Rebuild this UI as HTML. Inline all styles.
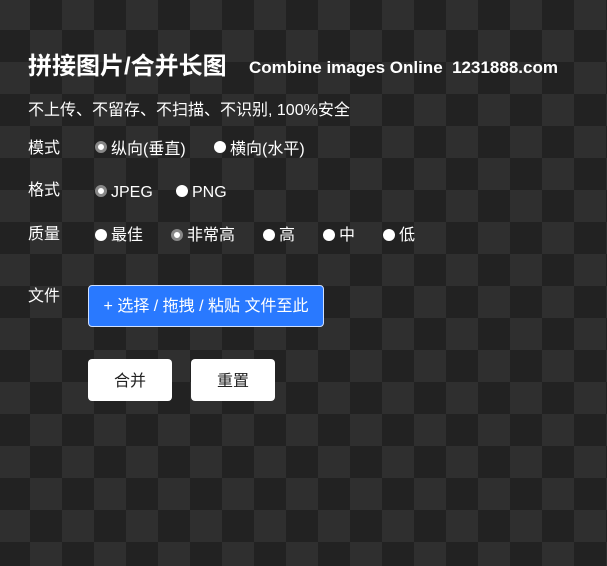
<!DOCTYPE html>
<html><head><meta charset="utf-8"><style>
html,body{margin:0;padding:0;}
body{width:607px;height:566px;overflow:hidden;position:relative;background:#222;
font-family:"Liberation Sans","Noto Sans CJK SC",sans-serif;color:#fff;font-size:16px;}
.bg{position:absolute;left:0;top:0;}
.a{position:absolute;white-space:nowrap;line-height:20px;}
.r{position:absolute;width:12px;height:12px;border-radius:50%;background:#fff;box-sizing:border-box;}
.r.c{border:3px solid #888;background:#fff;}
.btn{position:absolute;background:#fff;color:#222;border-radius:4px;text-align:center;font-size:16px;}
</style></head><body>
<svg class="bg" width="607" height="566"><defs><pattern id="p" x="-2" y="-2" width="64" height="64" patternUnits="userSpaceOnUse"><rect width="64" height="64" fill="#2f2f2f"/><rect x="32" y="0" width="32" height="32" fill="#222"/><rect x="0" y="32" width="32" height="32" fill="#222"/></pattern></defs><rect width="607" height="566" fill="url(#p)"/></svg>
<div class="a" style="left:28px;top:55px;font-size:24px;line-height:24px;font-weight:bold;">拼接图片/合并长图</div>
<div class="a" style="left:249px;top:58px;font-size:17px;font-weight:bold;">Combine images Online&nbsp; 1231888.com</div>
<div class="a" style="left:28px;top:101px;">不上传、不留存、不扫描、不识别, 100%安全</div>

<div class="a" style="left:28px;top:139px;">模式</div>
<div class="r c" style="left:95px;top:141px"></div><div class="a" style="left:111px;top:140px;">纵向(垂直)</div>
<div class="r" style="left:214px;top:141px"></div><div class="a" style="left:230px;top:140px;">横向(水平)</div>

<div class="a" style="left:28px;top:181px;">格式</div>
<div class="r c" style="left:95px;top:185px"></div><div class="a" style="left:111px;top:183px;">JPEG</div>
<div class="r" style="left:176px;top:185px"></div><div class="a" style="left:192px;top:183px;">PNG</div>

<div class="a" style="left:28px;top:225px;">质量</div>
<div class="r" style="left:95px;top:229px"></div><div class="a" style="left:111px;top:226px;">最佳</div>
<div class="r c" style="left:171px;top:229px"></div><div class="a" style="left:187px;top:226px;">非常高</div>
<div class="r" style="left:263px;top:229px"></div><div class="a" style="left:279px;top:226px;">高</div>
<div class="r" style="left:323px;top:229px"></div><div class="a" style="left:339px;top:226px;">中</div>
<div class="r" style="left:383px;top:229px"></div><div class="a" style="left:399px;top:226px;">低</div>

<div class="a" style="left:28px;top:287px;">文件</div>
<div class="a" style="left:88px;top:285px;background:#2979ff;border:1px solid #cfe0ff;border-radius:4px;line-height:42px;text-align:center;width:234px;height:40px;font-size:16px;">+ 选择 / 拖拽 / 粘贴 文件至此</div>

<div class="btn" style="left:88px;top:359px;width:84px;height:42px;line-height:46px;">合并</div>
<div class="btn" style="left:191px;top:359px;width:84px;height:42px;line-height:46px;">重置</div>
</body></html>
